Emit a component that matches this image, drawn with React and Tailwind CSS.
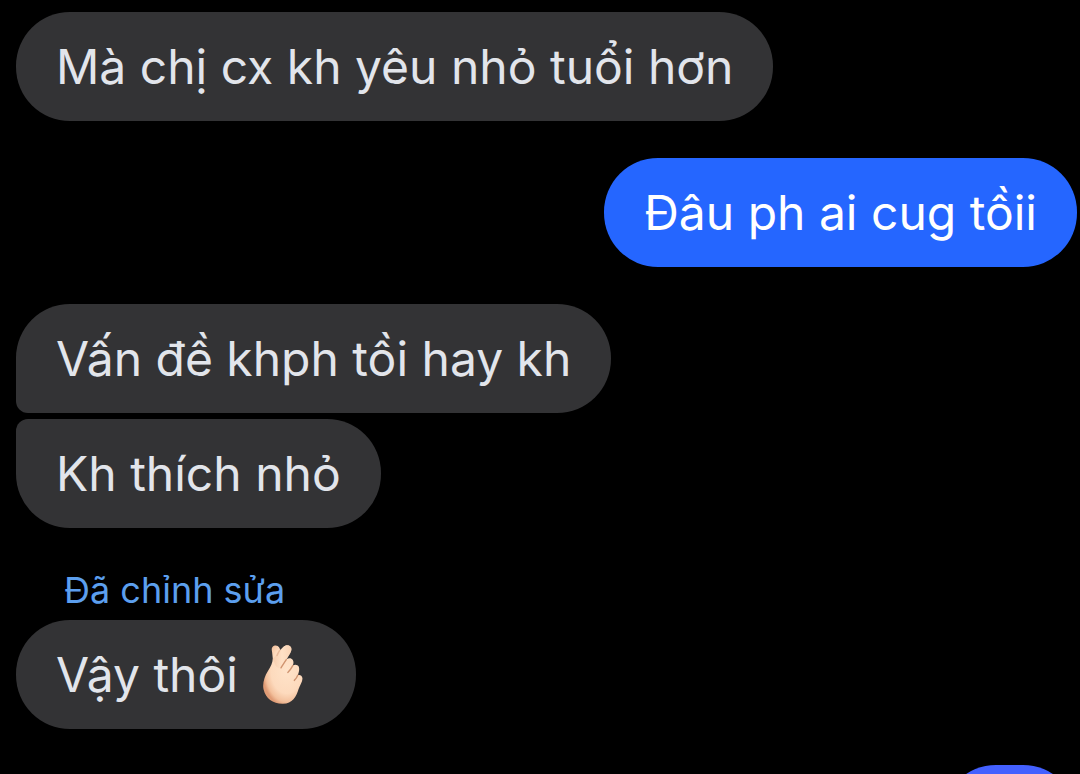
function FingerHeart() {
  return (
    <svg className="h-[60px] w-[65px] shrink-0" viewBox="3 0 65 60" aria-hidden="true">
      <defs>
        <radialGradient id="skin" cx="0.6" cy="0.42" r="0.62">
          <stop offset="0" stopColor="#ffe3c9" />
          <stop offset="0.65" stopColor="#fddabd" />
          <stop offset="0.88" stopColor="#f3c09c" />
          <stop offset="1" stopColor="#e09c76" />
        </radialGradient>
        <linearGradient id="finger" x1="0" y1="0" x2="1" y2="0">
          <stop offset="0" stopColor="#f3c6a5" />
          <stop offset="0.5" stopColor="#ffe2c8" />
          <stop offset="1" stopColor="#f8d0b0" />
        </linearGradient>
      </defs>
      <path
        d="M24.5 2C26.5-.3 30 .2 31.2 2.6L32.4 5 35.3 2C37.5-.2 40.6-.2 42.4 1.6 44 3.3 43.6 5.8 42.3 7.9L38.3 14.6C40.6 12.7 43.4 13 44.8 15 45.8 16.5 45.6 18.7 44.8 20.6 47 19 49.6 19.6 50.7 21.6 51.7 23.6 51 27 49.9 30.1 52 29.4 54 30.6 54.4 33 54.9 36.3 51.8 40.5 50.6 44 48.4 51.5 44.4 58.7 35 58.8 25 59 17.8 53.6 15.6 44.6 14.2 38.6 16.4 31.5 19.8 26.3 23 21.5 24.5 18 24.8 13.6L24.1 7.2C23.8 5 23.3 3.4 24.5 2Z"
        fill="url(#skin)"
      />
      <path
        d="M32.4 5L35.3 2C37.5-.2 40.6-.2 42.4 1.6 44 3.3 43.6 5.8 42.3 7.9L33.5 23C31 24 27.5 22 27 19L24.8 14Z"
        fill="url(#finger)"
        opacity="0.7"
      />
      <g fill="none" stroke="#d09470" strokeLinecap="round" strokeWidth="1.4">
        <path d="M31.8 5.2C30.6 7.2 29.8 8.7 29 10.5" opacity="0.45" />
        <path d="M38.3 14.6C36.6 17 34.8 20 33 22.8" />
        <path d="M44.8 20.6C43.2 23.6 41.6 25.8 39.8 27.4" />
        <path d="M49.9 30.1C48.9 32.6 47.8 34.1 46.3 35.4" />
      </g>
    </svg>
  );
}

function Bubble({ mine = false, className = "rounded-[54px]", children }) {
  return (
    <div
      className={`flex min-h-[109px] max-w-[80%] items-center px-10 py-6 text-5xl leading-[60px] ${
        mine ? "self-end text-white" : "self-start bg-[#333335] text-[#e2e5eb]"
      } ${className}`}
    >
      {children}
    </div>
  );
}

export default function App() {
  return (
    <main className="flex h-screen flex-col overflow-hidden bg-black pt-3 pr-[3px] pl-4 font-['Inter','Noto_Sans',sans-serif]">
      <Bubble>Mà chị cx kh yêu nhỏ tuổi hơn</Bubble>
      <Bubble mine className="mt-[37px] rounded-[54px] bg-[#2566ff]">
        Đâu ph ai cug tồii
      </Bubble>
      <div className="mt-[37px] flex flex-col gap-[6px]">
        <Bubble className="rounded-[54px] rounded-bl-[12px]">Vấn đề khph tồi hay kh</Bubble>
        <Bubble className="rounded-[54px] rounded-tl-[12px]">Kh thích nhỏ</Bubble>
      </div>
      <button type="button" className="mt-10 ml-12 self-start text-[36px] leading-[44px] text-[#5c9fee]">
        Đã chỉnh sửa
      </button>
      <Bubble className="mt-2 rounded-[54px]">
        <span className="whitespace-pre">Vậy thôi </span>
        <FingerHeart />
      </Bubble>
      <Bubble mine className="mt-9 w-[135px] shrink-0 rounded-[54px] bg-[#4360ff]" />
    </main>
  );
}
